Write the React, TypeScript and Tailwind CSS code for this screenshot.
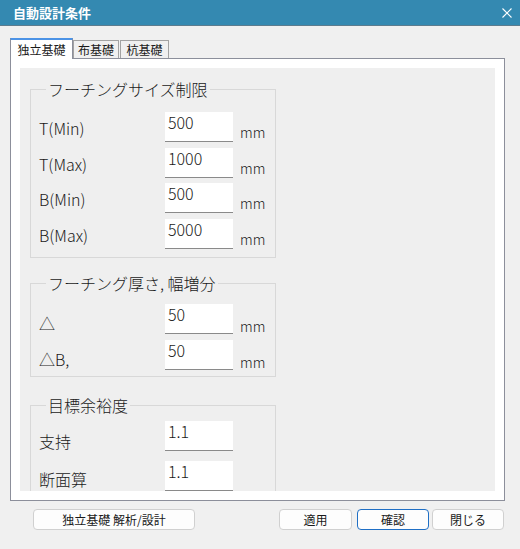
import React from 'react'

const font = "font-['Noto_Sans_CJK_JP','Noto_Sans',sans-serif]"

function Field({ value }: { value: string }) {
  return (
    <div className="w-[68px] h-[30px] shrink-0 bg-white border-b border-[#8a8a8a] pl-[3px] pt-[2px] text-[16px] leading-[16px] text-[#1a1a1a]">
      {value}
    </div>
  )
}

export default function App() {
  return (
    <div className={`${font} font-light w-[520px] h-[549px] bg-[#f0f0f0] overflow-hidden text-[#1a1a1a] select-none`}>
      {/* Title bar */}
      <div className="h-[26px] bg-[#3489b1] border-b border-[#5d7c8e] flex items-center justify-between pl-[13px] pr-[8px]">
        <span className="text-white font-bold text-[13px] leading-none">自動設計条件</span>
        <svg width="10" height="10" viewBox="0 0 10 10">
          <path d="M0.5 0.5 L9.5 9.5 M9.5 0.5 L0.5 9.5" stroke="white" strokeWidth="1.1" />
        </svg>
      </div>

      {/* Tabs */}
      <div className="relative z-10 mt-[12px] ml-[10px] flex items-end h-[20px] text-[12px] font-normal">
        <div className="h-[21px] -mb-px w-[63px] bg-white border-t-2 border-t-[#4c93e6] border-x border-x-[#8c8f9b] flex items-center justify-center leading-none">
          独立基礎
        </div>
        <div className="h-[18px] w-[46px] bg-[#f0f0f0] border-t border-x border-[#a3a3a3] flex items-center justify-center leading-none">
          布基礎
        </div>
        <div className="h-[18px] w-[49px] ml-[1px] bg-[#f0f0f0] border-t border-x border-[#a3a3a3] flex items-center justify-center leading-none">
          杭基礎
        </div>
      </div>

      {/* Panel */}
      <div className="ml-[10px] w-[495px] h-[443px] bg-white border border-[#8c8f9b] p-[9px]">
        <div className="h-full bg-[#efefef] overflow-hidden pt-[10px] pl-[10px] text-[16px]">
          {/* Group 1 */}
          <fieldset className="w-[246px] border border-[#d8d8d8] pl-[8px] pb-[8px]">
            <legend className="ml-[7px] px-[2px] leading-[22px]">フーチングサイズ制限</legend>
            <div className="flex flex-col mt-[12px]">
              {[
                ['T(Min)', '500', ''],
                ['T(Max)', '1000', 'mt-[6px]'],
                ['B(Min)', '500', 'mt-[5px]'],
                ['B(Max)', '5000', 'mt-[6px]'],
              ].map(([label, value, mt]) => (
                <div key={label} className={`flex items-start h-[30px] ${mt}`}>
                  <div className="w-[126px] leading-[22px] mt-[5px]">{label}</div>
                  <Field value={value} />
                  <div className="ml-[7px] mt-[9px] text-[14px] leading-[22px]">mm</div>
                </div>
              ))}
            </div>
          </fieldset>

          {/* Group 2 */}
          <fieldset className="mt-[14px] w-[246px] border border-[#d8d8d8] pl-[8px] pb-[6px]">
            <legend className="ml-[7px] px-[2px] leading-[22px]">フーチング厚さ, 幅増分</legend>
            <div className="flex items-start h-[30px] mt-[10px]">
              <div className="w-[126px] leading-[22px] mt-[8px]">△</div>
              <Field value="50" />
              <div className="ml-[7px] mt-[11px] text-[14px] leading-[22px]">mm</div>
            </div>
            <div className="flex items-start h-[30px] mt-[6px]">
              <div className="w-[126px] leading-[22px] mt-[8px]">△B,</div>
              <Field value="50" />
              <div className="ml-[7px] mt-[11px] text-[14px] leading-[22px]">mm</div>
            </div>
          </fieldset>

          {/* Group 3 */}
          <fieldset className="mt-[17px] w-[246px] border border-[#d8d8d8] pl-[8px] pb-[8px]">
            <legend className="ml-[7px] px-[2px] leading-[22px]">目標余裕度</legend>
            <div className="flex items-start h-[30px] mt-[5px]">
              <div className="w-[126px] leading-[22px] mt-[9px]">支持</div>
              <Field value="1.1" />
            </div>
            <div className="flex items-start h-[30px] mt-[10px]">
              <div className="w-[126px] leading-[17px] mt-[10px]">断面算</div>
              <Field value="1.1" />
            </div>
          </fieldset>
        </div>
      </div>

      {/* Buttons */}
      <div className="flex mt-[8px] text-[12px] font-normal">
        <button className="ml-[33px] w-[162px] h-[21px] rounded-[4px] bg-[#fdfdfd] border border-[#d0d0d0] leading-none">
          独立基礎 解析/設計
        </button>
        <button className="ml-[84px] w-[73px] h-[21px] rounded-[4px] bg-[#fdfdfd] border border-[#d0d0d0] leading-none">
          適用
        </button>
        <button className="ml-[5px] w-[72px] h-[21px] rounded-[4px] bg-[#fdfdfd] border border-[#1f6fc5] leading-none">
          確認
        </button>
        <button className="ml-[3px] w-[72px] h-[21px] rounded-[4px] bg-[#fdfdfd] border border-[#d0d0d0] leading-none">
          閉じる
        </button>
      </div>
    </div>
  )
}
